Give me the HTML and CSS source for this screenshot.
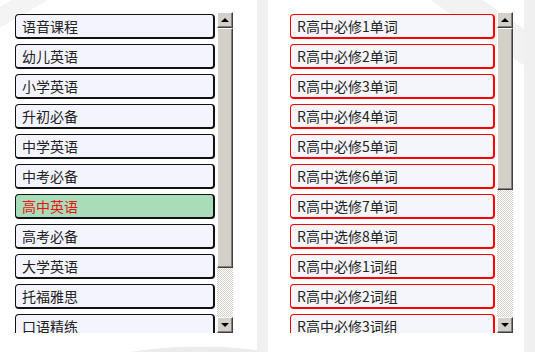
FILE: index.html
```html
<!DOCTYPE html>
<html>
<head>
<meta charset="utf-8">
<link rel="stylesheet" href="styles.css">
</head>
<body>
<div class="page">
  <div class="panel panel-left">
    <div class="list">
      <div class="item">语音课程</div>
      <div class="item">幼儿英语</div>
      <div class="item">小学英语</div>
      <div class="item">升初必备</div>
      <div class="item">中学英语</div>
      <div class="item">中考必备</div>
      <div class="item selected">高中英语</div>
      <div class="item">高考必备</div>
      <div class="item">大学英语</div>
      <div class="item">托福雅思</div>
      <div class="item">口语精练</div>
    </div>
    <div class="scrollbar">
      <div class="sb-btn"><span class="arrow-up"></span></div>
      <div class="sb-thumb" style="height:240px"></div>
      <div class="sb-track"></div>
      <div class="sb-btn"><span class="arrow-down"></span></div>
    </div>
  </div>
  <div class="panel panel-right">
    <div class="list list-wide">
      <div class="item red">R高中必修1单词</div>
      <div class="item red">R高中必修2单词</div>
      <div class="item red">R高中必修3单词</div>
      <div class="item red">R高中必修4单词</div>
      <div class="item red">R高中必修5单词</div>
      <div class="item red">R高中选修6单词</div>
      <div class="item red">R高中选修7单词</div>
      <div class="item red">R高中选修8单词</div>
      <div class="item red">R高中必修1词组</div>
      <div class="item red">R高中必修2词组</div>
      <div class="item red">R高中必修3词组</div>
    </div>
    <div class="scrollbar">
      <div class="sb-btn"><span class="arrow-up"></span></div>
      <div class="sb-thumb" style="height:162px"></div>
      <div class="sb-track"></div>
      <div class="sb-btn"><span class="arrow-down"></span></div>
    </div>
  </div>
</div>
</body>
</html>
```
FILE: styles.css
```css
html, body {
  margin: 0;
  padding: 0;
}
body {
  width: 535px;
  height: 352px;
  overflow: hidden;
  font-family: "Noto Sans CJK SC", "Noto Sans", sans-serif;
  background:
    linear-gradient(90deg, transparent 257px, #efefef 257px, #f1f1f1 268px, transparent 268px),
    linear-gradient(90deg, transparent 524px, #f0f0f0 524px),
    radial-gradient(ellipse 160px 30px at 200px 365px, #ececec 60%, transparent 62%),
    radial-gradient(ellipse 140px 26px at 420px 368px, #ededed 60%, transparent 62%),
    linear-gradient(150deg, transparent 6px, #f4f4f4 6px, #f4f4f4 24px, transparent 24px),
    linear-gradient(215deg, transparent 30px, #f2f2f2 30px, #f2f2f2 60px, transparent 60px),
    #ffffff;
}
.page {
  display: flex;
  padding-top: 12px;
}
.panel {
  display: flex;
  height: 321px;
}
.panel-left {
  margin-left: 15px;
}
.panel-right {
  margin-left: 57px;
}
.list {
  width: 200px;
  height: 319px;
  margin-top: 2px;
  overflow: hidden;
  display: flex;
  flex-direction: column;
  gap: 5px;
}
.list-wide {
  width: 205px;
}
.item {
  flex: none;
  height: 22px;
  box-sizing: content-box;
  border: 1px solid #111;
  border-right-width: 2px;
  border-bottom-width: 2px;
  border-radius: 4px;
  background: #f4f4fe;
  color: #222;
  font-size: 14px;
  line-height: 22px;
  padding-left: 6px;
  white-space: nowrap;
}
.item.selected {
  background: #a9dcb9;
  color: #ee1111;
}
.item.red {
  border-color: #ff0000;
  background: #f5f6fb;
  color: #222;
}
.scrollbar {
  width: 16px;
  height: 321px;
  margin-left: 2px;
  display: flex;
  flex-direction: column;
}
.sb-btn, .sb-thumb {
  flex: none;
  box-sizing: border-box;
  background: #d4d0c8;
  border-top: 1px solid #fff;
  border-left: 1px solid #fff;
  border-right: 1px solid #404040;
  border-bottom: 1px solid #404040;
  box-shadow: inset -1px -1px 0 #808080;
}
.sb-btn {
  height: 16px;
  display: flex;
  align-items: center;
  justify-content: center;
}
.sb-track {
  flex: 1;
  background-color: #ffffff;
  background-image: repeating-conic-gradient(#d4d0c8 0 25%, #ffffff 0 50%);
  background-size: 2px 2px;
}
.arrow-up {
  width: 0;
  height: 0;
  border-left: 4px solid transparent;
  border-right: 4px solid transparent;
  border-bottom: 4px solid #000;
  margin-top: -1px;
}
.arrow-down {
  width: 0;
  height: 0;
  border-left: 4px solid transparent;
  border-right: 4px solid transparent;
  border-top: 4px solid #000;
}
```
